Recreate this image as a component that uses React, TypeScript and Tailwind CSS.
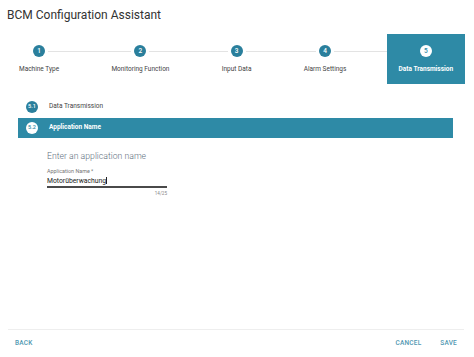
import React from "react";

const TEAL = "bg-[#2e8aa6]";

function Circle({ n, active }: { n: string; active?: boolean }) {
  return (
    <div
      className={
        "w-[12px] h-[12px] shrink-0 rounded-full flex items-center justify-center text-[6.5px] font-medium leading-none " +
        (active ? "bg-white text-[#2e8aa6]" : "bg-[#2a7f9c] text-white")
      }
    >
      {n}
    </div>
  );
}

function Header({
  n,
  label,
  active,
  first,
  last,
}: {
  n: string;
  label: string;
  active?: boolean;
  first?: boolean;
  last?: boolean;
}) {
  return (
    <div
      className={
        "h-[50px] flex flex-col items-center shrink-0 " + (active ? TEAL : "")
      }
    >
      <div className="pt-[11px] w-full flex items-center gap-[3px]">
        <div className={"flex-1 h-px " + (first || active ? "" : "bg-[#e3e3e3]")} />
        <Circle n={n} active={active} />
        <div className={"flex-1 h-px " + (last || active ? "" : "bg-[#e3e3e3]")} />
      </div>
      <div
        className={
          "mt-[8px] px-[12px] text-[6.5px] leading-[8px] whitespace-nowrap " +
          (active ? "text-white font-bold" : "text-[#444]")
        }
      >
        {label}
      </div>
    </div>
  );
}

function Line() {
  return <div className="flex-1 h-px bg-[#e3e3e3] mt-[17px]" />;
}

export default function App() {
  return (
    <div
      className="w-[474px] h-[357px] flex flex-col bg-white"
      style={{ fontFamily: "Roboto, 'Liberation Sans', sans-serif" }}
    >
      <div className="pt-[7px] pl-[7px] text-[12px] leading-[16px] text-[#333]">
        BCM Configuration Assistant
      </div>

      <div className="mt-[11px] pl-[7px] pr-[9px] flex items-start">
        <Header n="1" label="Machine Type" first />
        <Line />
        <Header n="2" label="Monitoring Function" />
        <Line />
        <Header n="3" label="Input Data" />
        <Line />
        <Header n="4" label="Alarm Settings" />
        <Line />
        <Header n="5" label="Data Transmission" active last />
      </div>

      <div className="mt-[13px] ml-[18px] h-[20px] pl-[8px] flex items-center">
        <div className="w-[12px] h-[12px] rounded-full bg-[#2a7f9c] text-white text-[5.5px] font-medium flex items-center justify-center leading-none">
          5.1
        </div>
        <div className="ml-[11px] text-[6.5px] text-[#444]">Data Transmission</div>
      </div>

      <div className={"mt-[1px] ml-[18px] w-[435px] h-[20px] pl-[8px] flex items-center " + TEAL}>
        <div className="w-[12px] h-[12px] rounded-full bg-white text-[#2e8aa6] text-[5.5px] font-medium flex items-center justify-center leading-none">
          5.2
        </div>
        <div className="ml-[11px] text-[6.5px] text-white font-bold">Application Name</div>
      </div>

      <div className="pl-[47px]">
        <div className="mt-[11.5px] text-[8.7px] leading-[12px] font-light text-[#5f7080]">
          Enter an application name
        </div>
        <div className="w-[120px]">
          <div className="mt-[6.5px] text-[5.4px] leading-[6px] text-[#777]">
            Application Name *
          </div>
          <div className="mt-[2.5px] text-[6.8px] leading-[9px] text-[#222]">
            <span>Motorüberwachung</span>
            <span className="inline-block w-px h-[7px] bg-[#222] align-middle" />
          </div>
          <div className="h-[2px] bg-[#4a4a4a]" />
          <div className="mt-[3px] text-right text-[4.6px] leading-[6px] text-[#888]">
            14/25
          </div>
        </div>
      </div>

      <div className="mt-auto ml-[8px] w-[456px] border-t border-[#eeeeee] h-[28px] flex items-center px-[7px] text-[6.5px] font-medium text-[#4f97b1] tracking-[0.2px]">
        <span>BACK</span>
        <span className="ml-auto">CANCEL</span>
        <span className="ml-[19px]">SAVE</span>
      </div>
    </div>
  );
}
